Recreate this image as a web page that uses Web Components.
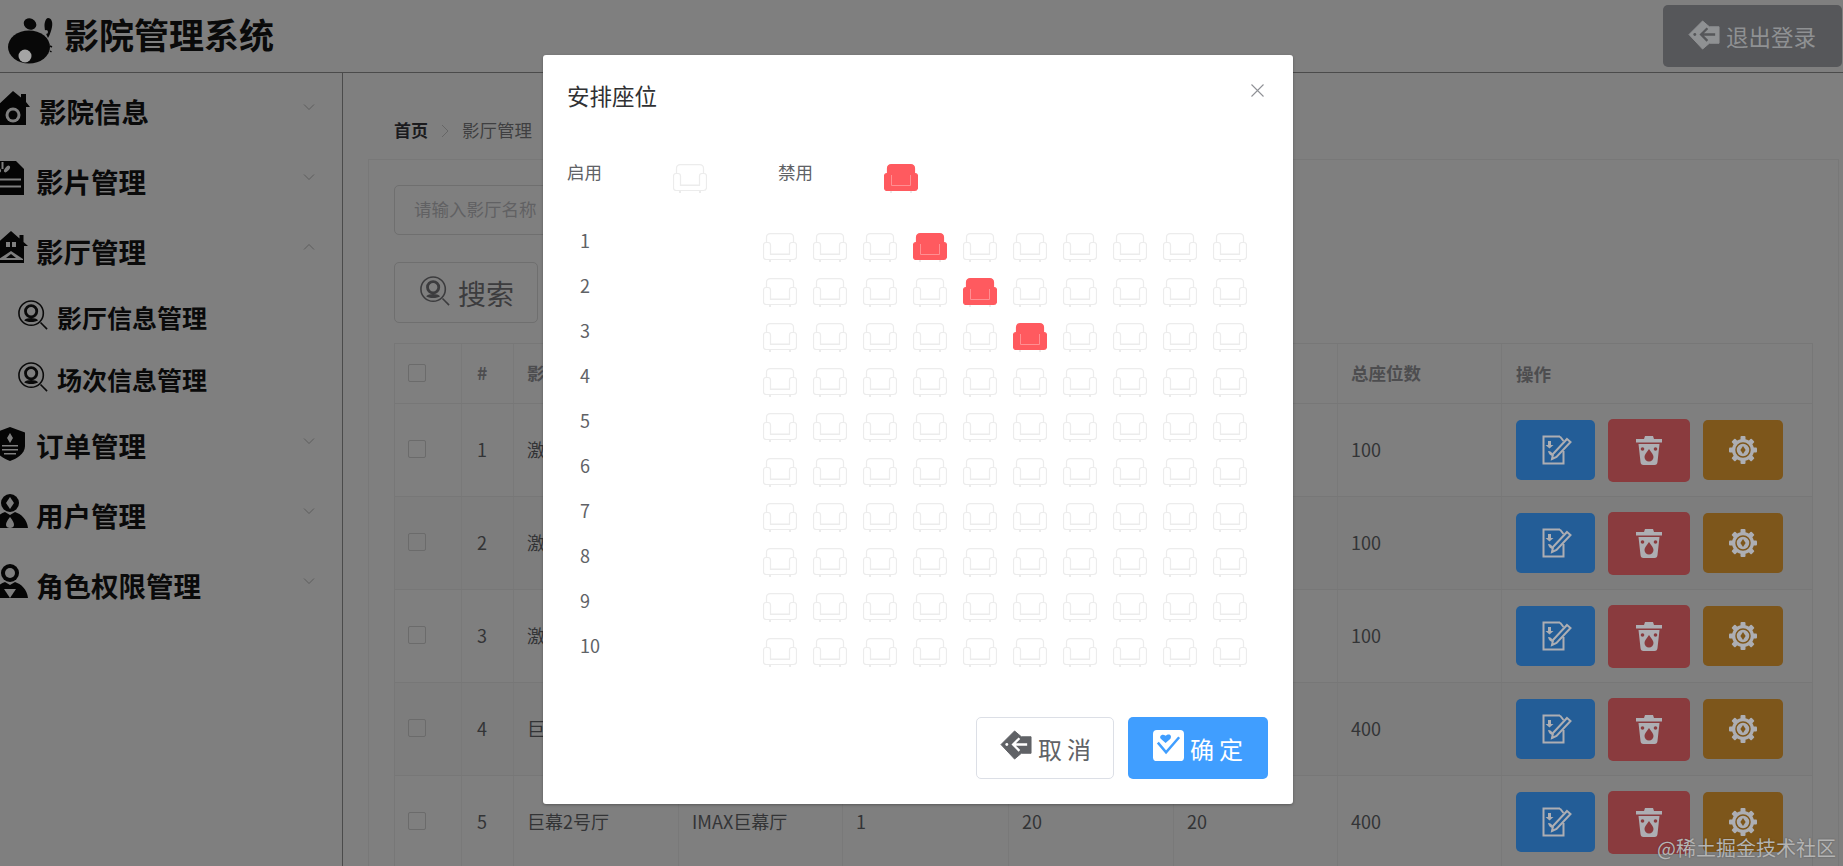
<!DOCTYPE html>
<html lang="zh-CN">
<head>
<meta charset="utf-8">
<title>影院管理系统</title>
<style>
    html, body {
        margin: 0;
        height: 866px;
        overflow: hidden;
        background: #7f7f7f;
        font-family: "Noto Sans CJK SC", sans-serif;
    }
</style>
</head>
<body>
<cinema-app></cinema-app>
<script>
const gearTeeth = [0, 45, 90, 135, 180, 225, 270, 315]
    .map((a) => `<rect x="13.500" y="2" width="5" height="5" rx="1" transform="rotate(${a} 16 16)"/>`).join('');

// everything is drawn in currentColor, --cut is the colour behind the icon
const ICONS = {
    logo: [60, `<ellipse cx="30" cy="18" rx="6.500" ry="5.500" transform="rotate(25 30 18)"/>
        <path d="M48 12c3.500 0 5 4 4 9-.8 4-2.500 9-4 11-1.500-3-3.500-7-3.500-12 0-4 1.500-8 3.500-8z"/>
        <ellipse cx="29" cy="41" rx="21" ry="16.500"/>
        <circle cx="25" cy="50" r="6.500" fill="#a4a4a4"/>
        <circle cx="46" cy="26" r="2" fill="var(--cut)"/>
        <path d="M50 40l2 1M50 45l1.500 1" stroke="currentColor" stroke-width="1.500"/>`],
    house: [34, `<path d="M17 0l8 6.500V3h5v8l4 5h-4v18H4V16H0z"/><circle cx="17" cy="24" r="7.500" fill="var(--cut)"/><circle cx="17" cy="24" r="4.500"/>`],
    film: [34, `<path d="M0 0h26l8 8v26H0z"/><path d="M0 17.500h31v2H0zM0 24.500h31v2H0z" fill="var(--cut)"/>
        <ellipse cx="8" cy="8" rx="2" ry="4" transform="rotate(-40 8 8)" fill="var(--cut)"/><ellipse cx="17" cy="8" rx="2" ry="4" transform="rotate(40 17 8)" fill="var(--cut)"/><rect x="11.500" y="1" width="2" height="7" fill="var(--cut)"/>`],
    hall: [34, `<path d="M17 0l8.500 7.500V4h4v7l4.500 4h-4v17H4V15H0z"/><path d="M12 11h4v5h-4zM18 11h4v5h-4z" fill="var(--cut)"/><path d="M17 20L5 28v1h24v-1z" fill="var(--cut)"/><path d="M17 23l-5 4h10z"/>`],
    shield: [30, `<path d="M15 0l15 5.500V19c0 8-9 13-15 15C9 32 0 27 0 19V5.500z"/><path d="M15 6l3 5-3 5-3-5z" fill="var(--cut)"/><path d="M7 18h16v1.500H7zM7 22h16v1.500H7zM9 26h12v1.500H9z" fill="var(--cut)"/>`],
    staff: [36, `<circle cx="18" cy="9" r="9"/><path d="M18 3l4 6-4 6-4-6z" fill="var(--cut)"/><path d="M0 34c1-9 7-14 13-16l5 3 5-3c6 2 12 7 13 16z"/><path d="M18 23c2.500 3 4 5.500 4 8 0 2-2 3-4 3s-4-1-4-3c0-2.500 1.500-5 4-8z" fill="var(--cut)"/>`],
    role: [36, `<circle cx="18" cy="9" r="9"/><circle cx="18" cy="9" r="5" fill="var(--cut)"/><path d="M0 34c1-9 7-14 13-16l5 3 5-3c6 2 12 7 13 16z"/><path d="M12 25h12l-6 9z" fill="var(--cut)"/>`],
    find: [32, `<g fill="none" stroke="currentColor"><circle cx="14" cy="14" r="13" stroke-width="1.700"/><circle cx="14" cy="12" r="6" stroke-width="3"/><path d="M24 24l7 7" stroke-width="1.700"/></g><path d="M6.500 21.500c3-3 12-3 15 0-3 2.500-12 2.500-15 0z"/>`],
    back: [32, `<path d="M0 15L14 1l7 6h10v17H21l-7 6z" stroke="currentColor" stroke-width="1" stroke-linejoin="round"/><circle cx="6" cy="15" r="1.500" fill="var(--cut)"/><path d="M19 8.500L12.500 15l6.500 6.500M12.500 15H27" fill="none" stroke="var(--cut)" stroke-width="2.400"/>`],
    agree: [32, `<rect width="32" height="32" rx="4"/><path d="M13 13.500L8 9c-2-2.500 1.500-6 5-3 3.500-3 7-.5 5 3z" fill="var(--cut)"/><path d="M5 13l8.500 10L27 7.500" fill="none" stroke="var(--cut)" stroke-width="2.600"/>`],
    edit: [30, `<path d="M19 1.500H2.500v27h20V16" fill="none" stroke="currentColor" stroke-width="2"/><path d="M19 1.500L22.500 6" fill="none" stroke="currentColor" stroke-width="2"/>
        <path d="M7 6h3v4h2.500L8.500 13.500 4.500 10H7z"/><path d="M7 16c3 0 5 2 5.500 5-3 0-5-2-5.500-5z"/>
        <path d="M26 4l3.500 3-14 15-4.500 2 1-5z" fill="none" stroke="currentColor" stroke-width="2"/>`],
    trash: [30, `<path d="M10 4l1-3h8l1 3h8v3.500H2V4z"/><path d="M4.500 9h21l-2 18c-.2 2-1 3-3 3h-11c-2 0-2.800-1-3-3z"/>
        <path d="M15 14c2.500 3.500 4.500 5.500 4.500 8 0 2.500-2 4.500-4.500 4.500s-4.500-2-4.500-4.500c0-2.500 2-4.500 4.500-8z" fill="var(--cut)"/><circle cx="8.500" cy="14" r="1.800" fill="var(--cut)"/><circle cx="21.500" cy="14" r="1.800" fill="var(--cut)"/>`],
    gear: [32, `${gearTeeth}<circle cx="16" cy="16" r="11"/><circle cx="16" cy="16" r="7" fill="none" stroke="var(--cut)" stroke-width="1.500"/><path d="M16 12l2.600 4-2.600 4-2.600-4z" fill="var(--cut)"/>`]
};

class AppIcon extends HTMLElement {
    connectedCallback() {
        const [box, body] = ICONS[this.getAttribute('name')];
        const size = this.getAttribute('size') || box;
        this.attachShadow({ mode: 'open' }).innerHTML = `
            <style>
                :host { display: block; flex: none; width: ${size}px; height: ${size}px; }
                svg { display: block; overflow: visible; }
            </style>
            <svg width="${size}" height="${size}" viewBox="0 0 ${box} ${box}" fill="currentColor">${body}</svg>`;
    }
}
customElements.define('app-icon', AppIcon);

class SeatIcon extends HTMLElement {
    connectedCallback() {
        const off = this.hasAttribute('off');
        const line = off ? '#ff8f92' : '#ececec';
        const fill = off ? '#ff5a5f' : '#fff';
        const edge = off ? fill : line;
        this.attachShadow({ mode: 'open' }).innerHTML = `
            <style>:host { display: block; flex: none; width: 34px; height: 29px; }</style>
            <svg width="34" height="29" viewBox="0 0 34 29">
                <path d="M3.500 21V4.500C3.500 2 5 .6 7.500 .6h19c2.500 0 4 1.400 4 3.900V21z" fill="${fill}" stroke="${edge}" stroke-width="1.200"/>
                <path d="M3 9.500h2c1.500 0 2.500 1 2.500 2.500v9.500h19V12c0-1.500 1-2.500 2.500-2.500h2c1.500 0 2.500 1 2.500 2.500v11.500c0 2-1 3-3 3H3.500c-2 0-3-1-3-3V12c0-1.500 1-2.500 2.500-2.500z" fill="${fill}" stroke="${edge}" stroke-width="1.200"/>
                <path d="M7.500 11v10.500h19V11" fill="none" stroke="${line}" stroke-width="1"/>
                <path d="M7 27v2M27 27v2" stroke="#d8d8d8" stroke-width="1"/>
            </svg>`;
    }
}
customElements.define('seat-icon', SeatIcon);

let headerTemplate = document.createElement('template');
headerTemplate.innerHTML = `
    <style>
        :host {
            display: flex;
            align-items: center;
            height: 72px;
            border-bottom: 1px solid #4b4b4b;
            --cut: #7f7f7f;
        }
        app-icon { color: #080808; }
        h1 {
            margin: 0 0 4px 4px;
            font-size: 35px;
            line-height: 68px;
            font-weight: 700;
            color: #0a0a0a;
        }
        button {
            display: flex;
            align-items: center;
            margin-left: auto;
            margin-right: 1px;
            width: 179px;
            height: 62px;
            padding: 0 0 0 26px;
            border: 0;
            border-radius: 5px;
            background: #56575a;
            color: #8f9193;
            font: 400 22.500px "Noto Sans CJK SC", sans-serif;
            --cut: #56575a;
        }
        button app-icon { color: #8f9193; margin-right: 6px; margin-top: -2px; }
    </style>
    <app-icon name="logo"></app-icon>
    <h1>影院管理系统</h1>
    <button><app-icon name="back" size="31"></app-icon>退出登录</button>
`;

class CinemaHeader extends HTMLElement {
    connectedCallback() {
        this.attachShadow({ mode: 'open' }).appendChild(headerTemplate.content.cloneNode(true));
    }
}
customElements.define('cinema-header', CinemaHeader);

class NavItem extends HTMLElement {
    connectedCallback() {
        const icon = this.getAttribute('icon');
        const shift = this.getAttribute('shift') || 0;
        const gap = this.getAttribute('gap') || 10;
        const up = this.hasAttribute('open');
        const chevron = up ? 'M1 6.500L6 1.500l5 5' : 'M1 1.500l5 5 5-5';
        this.attachShadow({ mode: 'open' }).innerHTML = `
            <style>
                :host { display: block; --cut: #7f7f7f; }
                .row {
                    display: flex;
                    align-items: center;
                    height: 70px;
                    font-size: 27.500px;
                    font-weight: 700;
                    color: #0a0a0a;
                }
                app-icon { margin-left: ${shift}px; margin-right: ${gap}px; margin-bottom: 11px; color: #050505; }
                span { padding-bottom: 4px; }
                svg { margin-left: auto; margin-right: 27px; margin-bottom: 12px; flex: none; }
            </style>
            <div class="row">
                <app-icon name="${icon}"></app-icon>
                <span>${this.getAttribute('label')}</span>
                <svg width="12" height="8" viewBox="0 0 12 8" fill="none" stroke="#5d5d5d" stroke-width="1"><path d="${chevron}"/></svg>
            </div>
            <slot></slot>`;
    }
}
customElements.define('nav-item', NavItem);

class NavSubItem extends HTMLElement {
    connectedCallback() {
        this.attachShadow({ mode: 'open' }).innerHTML = `
            <style>
                :host {
                    display: flex;
                    align-items: center;
                    gap: 9px;
                    height: 62px;
                    padding-left: 18px;
                    font-size: 25px;
                    font-weight: 700;
                    color: #0a0a0a;
                }
                app-icon { margin-bottom: 8px; color: #0a0a0a; --cut: #7f7f7f; }
                span { padding-bottom: 4px; }
            </style>
            <app-icon name="find" size="30"></app-icon>
            <span><slot></slot></span>`;
    }
}
customElements.define('nav-sub-item', NavSubItem);

let sideTemplate = document.createElement('template');
sideTemplate.innerHTML = `
    <style>
        :host {
            display: block;
            flex: none;
            box-sizing: border-box;
            width: 343px;
            padding-top: 5px;
            border-right: 1px solid #4b4b4b;
            overflow: hidden;
        }
    </style>
    <nav-item label="影院信息" icon="house" shift="-4" gap="9"></nav-item>
    <nav-item label="影片管理" icon="film" shift="-10" gap="12"></nav-item>
    <nav-item label="影厅管理" icon="hall" shift="-6" gap="8" open>
        <nav-sub-item>影厅信息管理</nav-sub-item>
        <nav-sub-item>场次信息管理</nav-sub-item>
    </nav-item>
    <nav-item label="订单管理" icon="shield" shift="-5" gap="11"></nav-item>
    <nav-item label="用户管理" icon="staff" shift="-8" gap="8"></nav-item>
    <nav-item label="角色权限管理" icon="role" shift="-8" gap="8"></nav-item>
`;

class SideMenu extends HTMLElement {
    connectedCallback() {
        this.attachShadow({ mode: 'open' }).appendChild(sideTemplate.content.cloneNode(true));
    }
}
customElements.define('side-menu', SideMenu);

class ActionButton extends HTMLElement {
    connectedCallback() {
        const color = this.getAttribute('color');
        this.attachShadow({ mode: 'open' }).innerHTML = `
            <style>
                :host {
                    display: flex;
                    align-items: center;
                    justify-content: center;
                    flex: none;
                    width: ${this.getAttribute('w')}px;
                    height: ${this.getAttribute('h')}px;
                    border-radius: 5px;
                    background: ${color};
                    color: #adaeb3;
                    --cut: ${color};
                }
            </style>
            <app-icon name="${this.getAttribute('icon')}"></app-icon>`;
    }
}
customElements.define('action-button', ActionButton);

class HallCell extends HTMLElement {
    connectedCallback() {
        this.attachShadow({ mode: 'open' }).innerHTML = `
            <style>
                :host {
                    display: flex;
                    align-items: center;
                    box-sizing: border-box;
                    padding: 0 0 2px 13px;
                    border-right: 1px solid #797979;
                    border-bottom: 1px solid #777;
                    white-space: nowrap;
                    overflow: hidden;
                }
                :host([last]) { border-right: 0; gap: 13px; padding: 0 0 0 14px; }
                :host([num]) { padding-left: 15px; }
            </style>
            <slot></slot>`;
    }
}
customElements.define('hall-cell', HallCell);

class HallRow extends HTMLElement {
    connectedCallback() {
        this.attachShadow({ mode: 'open' }).innerHTML = `
            <style>
                :host {
                    display: grid;
                    grid-template-columns: 67px 52px 165px 164px 166px 165px 164px 164px 1fr;
                    height: 93px;
                    font-size: 18px;
                    color: #333436;
                }
                :host([head]) { height: 60px; font-size: 17.500px; font-weight: 700; color: #4d4d4f; }
                :host([stripe]) { background: #7d7d7d; }
            </style>
            <slot></slot>`;
    }
}
customElements.define('hall-row', HallRow);

// only what shows around the dialog: the rest of rows 1-4 lies behind it
const HALLS = [
    ['激', '', '', '', '', 100],
    ['激', '', '', '', '', 100],
    ['激', '', '', '', '', 100],
    ['巨', '', '', '', '', 400],
    ['巨幕2号厅', 'IMAX巨幕厅', 1, 20, 20, 400]
];

class HallTable extends HTMLElement {
    connectedCallback() {
        const box = `<span class="check"></span>`;
        const heads = ['影', '', '', '', '', '总座位数']
            .map((t) => `<hall-cell>${t}</hall-cell>`).join('');
        const rows = HALLS.map((hall, i) => `
            <hall-row ${i % 2 ? 'stripe' : ''}>
                <hall-cell>${box}</hall-cell>
                <hall-cell num>${i + 1}</hall-cell>
                ${hall.map((t) => `<hall-cell>${t}</hall-cell>`).join('')}
                <hall-cell last>
                    <action-button color="#235d97" icon="edit" w="79" h="60"></action-button>
                    <action-button color="#8a3b3e" icon="trash" w="82" h="63"></action-button>
                    <action-button color="#7d561b" icon="gear" w="80" h="60"></action-button>
                </hall-cell>
            </hall-row>`).join('');
        this.attachShadow({ mode: 'open' }).innerHTML = `
            <style>
                :host { display: block; border: 1px solid #777; border-bottom: 0; }
                .check {
                    display: block;
                    box-sizing: border-box;
                    width: 18px;
                    height: 18px;
                    border: 1px solid #6b6b6b;
                    border-radius: 2px;
                }
            </style>
            <hall-row head>
                <hall-cell>${box}</hall-cell>
                <hall-cell num>#</hall-cell>
                ${heads}
                <hall-cell last>操作</hall-cell>
            </hall-row>
            ${rows}`;
    }
}
customElements.define('hall-table', HallTable);

let mainTemplate = document.createElement('template');
mainTemplate.innerHTML = `
    <style>
        :host { display: block; flex: 1; min-width: 0; padding-top: 44px; --cut: #7f7f7f; }
        .crumb {
            display: flex;
            align-items: center;
            height: 24px;
            padding-left: 51px;
            font-size: 17.500px;
            color: #3f3f41;
        }
        .crumb b { color: #1b1b1e; font-weight: 700; font-size: 17px; }
        .crumb svg { margin: 4px 13px 0 13px; }
        .card {
            margin: 18px 4px 0 25px;
            padding: 25px 25px 0;
            border: 1px solid #787878;
            border-bottom: 0;
        }
        .input {
            box-sizing: border-box;
            width: 360px;
            height: 50px;
            padding-left: 19px;
            border: 1px solid #6f6f6f;
            border-radius: 5px;
            line-height: 46px;
            font-size: 17.500px;
            color: #616163;
        }
        .search {
            display: flex;
            align-items: center;
            box-sizing: border-box;
            width: 144px;
            height: 61px;
            margin-top: 27px;
            padding-left: 25px;
            border: 1px solid #6f6f6f;
            border-radius: 5px;
            font-size: 28px;
            color: #3c3c3e;
            gap: 8px;
        }
        .search app-icon { margin-top: -3px; }
        hall-table { margin-top: 20px; }
    </style>
    <div class="crumb">
        <b>首页</b>
        <svg width="8" height="14" viewBox="0 0 8 14" fill="none" stroke="#666" stroke-width="1"><path d="M1 1l6 6-6 6"/></svg>
        <span>影厅管理</span>
    </div>
    <div class="card">
        <div class="input">请输入影厅名称</div>
        <div class="search"><app-icon name="find" size="30"></app-icon>搜索</div>
        <hall-table></hall-table>
    </div>
`;

class HallPage extends HTMLElement {
    connectedCallback() {
        this.attachShadow({ mode: 'open' }).appendChild(mainTemplate.content.cloneNode(true));
    }
}
customElements.define('hall-page', HallPage);

const DISABLED_SEATS = { 0: 3, 1: 4, 2: 5 };

class SeatDialog extends HTMLElement {
    connectedCallback() {
        let rows = '';
        for (let r = 0; r < 10; r++) {
            let seats = '';
            for (let c = 0; c < 10; c++) {
                seats += `<seat-icon ${DISABLED_SEATS[r] === c ? 'off' : ''}></seat-icon>`;
            }
            rows += `<div class="seat-row"><span class="num">${r + 1}</span>${seats}</div>`;
        }
        this.attachShadow({ mode: 'open' }).innerHTML = `
            <style>
                :host {
                    position: absolute;
                    left: 543px;
                    top: 55px;
                    width: 750px;
                    height: 749px;
                    box-sizing: border-box;
                    padding-top: 25px;
                    background: #fff;
                    border-radius: 3px;
                    box-shadow: 0 1px 3px rgba(0, 0, 0, .3);
                    color: #606266;
                }
                .title { margin-left: 24px; font-size: 22.500px; line-height: 30px; color: #303133; }
                .close { position: absolute; left: 708px; top: 29px; }
                .legend { display: flex; height: 33px; margin: 49px 0 0 24px; font-size: 17.500px; line-height: 26px; }
                .legend span { width: 106px; }
                .legend seat-icon { width: 105px; margin-top: 5px; }
                .seats { display: flex; flex-direction: column; gap: 16px; margin: 41px 0 0 37px; }
                .seat-row { display: flex; gap: 16px; }
                .num { width: 167px; font-size: 18px; line-height: 15px; }
                .footer { display: flex; justify-content: flex-end; gap: 14px; margin: 50px 25px 0 0; }
                .btn {
                    display: flex;
                    align-items: center;
                    box-sizing: border-box;
                    height: 62px;
                    border-radius: 5px;
                    font-size: 24px;
                    letter-spacing: 5px;
                }
                .cancel { width: 138px; padding-left: 24px; border: 1px solid #dcdfe6; color: #606266; --cut: #fff; }
                .ok { width: 140px; padding-left: 25px; background: #409eff; color: #fff; --cut: #409eff; }
                .btn app-icon { margin-right: 6px; margin-top: -6px; }
            </style>
            <div class="title">安排座位</div>
            <svg class="close" width="13" height="13" viewBox="0 0 13 13" stroke="#8f9196" stroke-width="1.100"><path d="M.5 .5l12 12M12.500 .5l-12 12"/></svg>
            <div class="legend">
                <span>启用</span><seat-icon></seat-icon>
                <span>禁用</span><seat-icon off></seat-icon>
            </div>
            <div class="seats">${rows}</div>
            <div class="footer">
                <div class="btn cancel"><app-icon name="back" size="31"></app-icon>取消</div>
                <div class="btn ok"><app-icon name="agree" size="31"></app-icon>确定</div>
            </div>`;
    }
}
customElements.define('seat-dialog', SeatDialog);

let appTemplate = document.createElement('template');
appTemplate.innerHTML = `
    <style>
        :host { display: block; position: relative; height: 866px; overflow: hidden; }
        .body { display: flex; height: 793px; }
        .mark {
            position: absolute;
            right: 7px;
            bottom: 5px;
            font-size: 20px;
            line-height: 26px;
            color: #b4b4b4;
            text-shadow: 0 0 2px rgba(0, 0, 0, .3);
        }
    </style>
    <cinema-header></cinema-header>
    <div class="body">
        <side-menu></side-menu>
        <hall-page></hall-page>
    </div>
    <seat-dialog></seat-dialog>
    <div class="mark">@稀土掘金技术社区</div>
`;

class CinemaApp extends HTMLElement {
    connectedCallback() {
        this.attachShadow({ mode: 'open' }).appendChild(appTemplate.content.cloneNode(true));
    }
}
customElements.define('cinema-app', CinemaApp);
</script>
</body>
</html>
